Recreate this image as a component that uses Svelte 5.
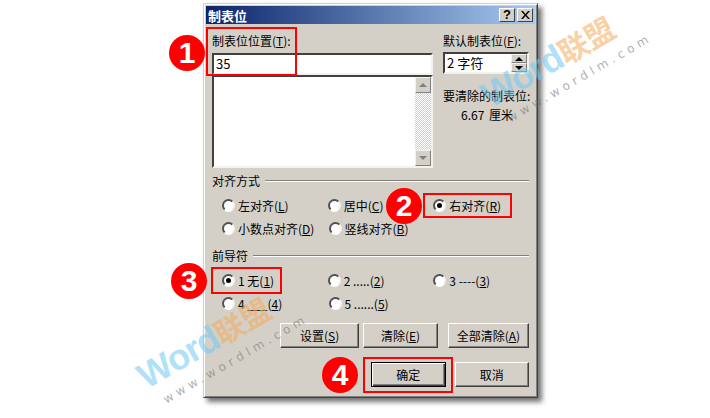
<script>
	const alignOptions = [
		[{ text: '左对齐(', key: 'L' }, { text: '居中(', key: 'C' }, { text: '右对齐(', key: 'R', checked: true }],
		[{ text: '小数点对齐(', key: 'D' }, { text: '竖线对齐(', key: 'B' }]
	];
	const leaderOptions = [
		[{ text: '1 无(', key: '1', checked: true }, { text: '2 .....(', key: '2' }, { text: '3 ----(', key: '3' }],
		[{ text: '4 ___(', key: '4' }, { text: '5 ......(', key: '5' }]
	];
	const badges = [
		{ n: 1, x: 187, y: 53 },
		{ n: 2, x: 404, y: 206 },
		{ n: 3, x: 189, y: 281 },
		{ n: 4, x: 340, y: 375 }
	];
	const boxes = [
		{ x: 206, y: 27, w: 91, h: 49 },
		{ x: 423, y: 193, w: 89, h: 25 },
		{ x: 211, y: 267, w: 71, h: 27 },
		{ x: 363, y: 357, w: 90, h: 36 }
	];
</script>

{#snippet radioGroup(rows)}
	{#each rows as row}
		<div class="radio-row">
			{#each row as opt}
				<div class="radio-item">
					<span class="radio" class:checked={opt.checked}></span>
					<span>{opt.text}<u>{opt.key}</u>)</span>
				</div>
			{/each}
		</div>
	{/each}
{/snippet}

<div class="page">
	<div class="dialog">
		<div class="titlebar">
			<span class="title">制表位</span>
			<div class="title-btns">
				<span class="title-btn">?</span>
				<span class="title-btn close">
					<svg viewBox="0 0 9 8" width="9" height="8"><path d="M0 0h2l2.500 3 2.500-3h2L5.500 4 9 8H7L4.500 5 2 8H0l3.500-4z" fill="#000"/></svg>
				</span>
			</div>
		</div>

		<div class="body">
			<div class="top">
				<div class="left-col">
					<div class="label">制表位位置(<u>T</u>):</div>
					<div class="field main-input">35</div>
					<div class="listbox">
						<div class="scrollbar">
							<span class="scroll-btn"><i class="tri up"></i></span>
							<span class="scroll-track"></span>
							<span class="scroll-btn"><i class="tri down"></i></span>
						</div>
					</div>
				</div>
				<div class="right-col">
					<div class="label">默认制表位(<u>F</u>):</div>
					<div class="field spin">
						<span>2 字符</span>
						<div class="spin-btns">
							<span class="spin-btn"><i class="tri small up"></i></span>
							<span class="spin-btn"><i class="tri small down"></i></span>
						</div>
					</div>
					<div class="clear-label">要清除的制表位:</div>
					<div class="clear-value">6.67 厘米</div>
				</div>
			</div>

			<div class="group-title first"><span>对齐方式</span><i></i></div>
			<div class="radios">{@render radioGroup(alignOptions)}</div>

			<div class="group-title second"><span>前导符</span><i></i></div>
			<div class="radios">{@render radioGroup(leaderOptions)}</div>

			<div class="btn-row actions">
				<button class="s">设置(<u>S</u>)</button>
				<button class="c">清除(<u>E</u>)</button>
				<button class="a">全部清除(<u>A</u>)</button>
			</div>
			<div class="btn-row confirm">
				<button class="ok">确定</button>
				<button class="cancel">取消</button>
			</div>
		</div>
	</div>

	{#each boxes as b}
		<div class="redbox" style="left:{b.x}px;top:{b.y}px;width:{b.w}px;height:{b.h}px"></div>
	{/each}
	{#each badges as b}
		<div class="badge" style="left:{b.x - 18}px;top:{b.y - 18}px">{b.n}</div>
	{/each}

	<div class="mark mark-a">
		<div class="mark-main"><span class="w">Word</span><span class="o">联盟</span></div>
		<div class="mark-url">www.wordlm.com</div>
	</div>
	<div class="mark mark-b">
		<div class="mark-main"><span class="w">Word</span><span class="o">联盟</span></div>
		<div class="mark-url">www.wordlm.com</div>
	</div>
</div>

<style>
	:global(body) {
		margin: 0;
		background: #fff;
	}

	.page {
		position: relative;
		width: 710px;
		height: 418px;
		overflow: hidden;
		padding: 3px 0 0 203px;
		box-sizing: border-box;
		font-family: "Noto Sans CJK SC", "Liberation Sans", sans-serif;
		font-size: 12px;
		color: #000;
	}

	.dialog {
		width: 335px;
		height: 395px;
		box-sizing: border-box;
		background: #d4d0c8;
		border: 1px solid;
		border-color: #d4d0c8 #404040 #404040 #d4d0c8;
		box-shadow: inset 1px 1px 0 #fff, inset -1px -1px 0 #808080, 4px 4px 5px rgba(0, 0, 0, 0.55);
		padding: 2px;
	}

	.titlebar {
		height: 18px;
		background: linear-gradient(90deg, #0a246a, #a6caf0);
		display: flex;
		justify-content: space-between;
		align-items: center;
		padding: 0 2px 0 2px;
		color: #fff;
	}

	.title {
		font-weight: 700;
		font-size: 13px;
	}

	.title-btns {
		display: flex;
		gap: 2px;
	}

	.title-btn {
		width: 16px;
		height: 14px;
		box-sizing: border-box;
		background: #d4d0c8;
		border: 1px solid;
		border-color: #fff #404040 #404040 #fff;
		color: #000;
		font: 700 13px/12px "Liberation Sans", sans-serif;
		display: flex;
		align-items: center;
		justify-content: center;
	}

	.body {
		padding: 8px 6px 0 6px;
	}

	.top {
		display: flex;
		gap: 10px;
	}

	.left-col {
		width: 221px;
	}

	.right-col {
		width: 86px;
	}

	.label {
		height: 18px;
		line-height: 18px;
		white-space: nowrap;
		margin-bottom: 3px;
	}

	.field {
		box-sizing: border-box;
		background: #fff;
		border: 2px solid;
		border-color: #404040 #f4f2ee #f4f2ee #404040;
		height: 22px;
		line-height: 18px;
		padding-left: 2px;
		font-size: 13px;
	}

	.listbox {
		box-sizing: border-box;
		height: 93px;
		background: #fff;
		border: 2px solid;
		border-color: #404040 #f4f2ee #f4f2ee #404040;
		display: flex;
		justify-content: flex-end;
	}

	.scrollbar {
		width: 16px;
		display: flex;
		flex-direction: column;
	}

	.scroll-btn {
		height: 16px;
		box-sizing: border-box;
		background: #d4d0c8;
		border: 1px solid;
		border-color: #f4f2ee #808080 #808080 #f4f2ee;
		display: flex;
		align-items: center;
		justify-content: center;
	}

	.scroll-track {
		flex: 1;
		background: repeating-conic-gradient(#d4d0c8 0 25%, #fff 0 50%) 0 0 / 2px 2px;
	}

	.tri {
		width: 0;
		height: 0;
		border-left: 4px solid transparent;
		border-right: 4px solid transparent;
	}

	.tri.up {
		border-bottom: 4px solid #808080;
	}

	.tri.down {
		border-top: 4px solid #808080;
	}

	.tri.small.up {
		border-bottom: 4px solid #000;
	}

	.tri.small.down {
		border-top: 4px solid #000;
	}

	.spin {
		display: flex;
		justify-content: space-between;
		margin-top: -1px;
	}

	.spin-btns {
		width: 16px;
		display: flex;
		flex-direction: column;
	}

	.spin-btn {
		flex: 1;
		box-sizing: border-box;
		background: #d4d0c8;
		border: 1px solid;
		border-color: #f4f2ee #808080 #808080 #f4f2ee;
		display: flex;
		align-items: center;
		justify-content: center;
	}

	.clear-label {
		margin-top: 13px;
		line-height: 18px;
		white-space: nowrap;
	}

	.clear-value {
		margin-top: 1px;
		padding-left: 18px;
		line-height: 18px;
		word-spacing: 2px;
	}

	.group-title {
		display: flex;
		align-items: center;
		gap: 5px;
		height: 18px;
		line-height: 18px;
	}

	.group-title.first {
		margin-top: 4px;
	}

	.group-title.second {
		margin-top: 7px;
	}

	.group-title i {
		flex: 1;
		height: 1px;
		background: #808080;
		border-bottom: 1px solid #fff;
	}

	.radios {
		padding-top: 4px;
	}

	.radio-row {
		display: flex;
		height: 23px;
		align-items: center;
		white-space: nowrap;
	}

	.radio-item {
		display: flex;
		align-items: center;
		gap: 3px;
		width: 106.500px;
		padding-left: 10px;
		box-sizing: border-box;
	}

	.radio {
		width: 13px;
		height: 13px;
		box-sizing: border-box;
		border-radius: 50%;
		background: #fff;
		border: 2px solid;
		border-color: #505050 #f4f2ee #fff #505050;
		position: relative;
		flex: none;
	}

	.radio.checked::after {
		content: "";
		position: absolute;
		left: 2px;
		top: 2px;
		width: 5px;
		height: 5px;
		border-radius: 50%;
		background: #000;
	}

	.btn-row {
		display: flex;
	}

	.actions {
		margin-top: 8px;
		padding-left: 68px;
		gap: 4px;
	}

	.confirm {
		margin-top: 14px;
		padding-left: 159px;
		gap: 9px;
	}

	button {
		font: inherit;
		color: #000;
		height: 25px;
		padding: 0;
		box-sizing: border-box;
		background: #d4d0c8;
		border: 1px solid;
		border-color: #fff #404040 #404040 #fff;
		box-shadow: inset -1px -1px 0 #808080;
		white-space: nowrap;
	}

	.s {
		width: 80px;
	}

	.c {
		width: 75px;
	}

	.a {
		width: 82px;
		margin-left: 6px;
	}

	.ok,
	.cancel {
		width: 75px;
	}

	.ok {
		border: 1px solid #000;
		box-shadow: inset 1px 1px 0 #fff, inset -1px -1px 0 #404040, inset -2px -2px 0 #808080;
	}

	.redbox {
		position: absolute;
		box-sizing: border-box;
		border: 2px solid #f00;
	}

	.badge {
		position: absolute;
		width: 36px;
		height: 36px;
		border-radius: 50%;
		background: #f00;
		color: #fff;
		font: 700 30px/36px "Liberation Sans", sans-serif;
		text-align: center;
	}

	.mark {
		position: absolute;
		transform: rotate(-30deg);
		transform-origin: left top;
		white-space: nowrap;
		pointer-events: none;
	}

	.mark-a {
		left: 130px;
		top: 361px;
	}

	.mark-b {
		left: 474px;
		top: 80px;
	}

	.mark-main {
		font: 700 36px/40px "Liberation Sans", sans-serif;
		letter-spacing: -1px;
		display: flex;
		align-items: baseline;
	}

	.mark-main .w {
		color: rgba(110, 200, 245, 0.55);
	}

	.mark-main .o {
		font-family: "Noto Sans CJK SC", sans-serif;
		font-size: 30px;
		letter-spacing: 0;
		color: rgba(245, 170, 90, 0.55);
	}

	.mark-url {
		font: 12px/14px "DejaVu Sans", sans-serif;
		letter-spacing: 4.200px;
		color: rgba(120, 120, 120, 0.6);
		margin-top: 3px;
		padding-left: 10px;
	}
</style>
